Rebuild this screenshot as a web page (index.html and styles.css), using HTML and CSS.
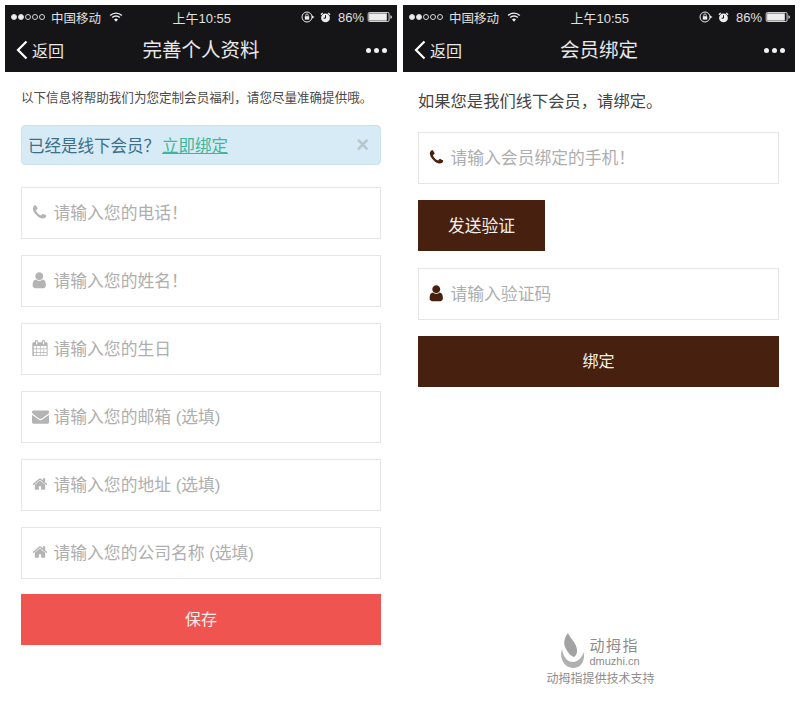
FILE: index.html
```html
<!DOCTYPE html>
<html lang="zh-CN">
<head>
  <meta charset="UTF-8">
  <meta name="viewport" content="width=device-width, initial-scale=1.0">
  <title>会员绑定</title>
  <link rel="stylesheet" href="styles.css">
</head>
<body>
  <!-- Shared icons -->
  <svg class="icon-defs" xmlns="http://www.w3.org/2000/svg">
    <symbol id="i-phone" viewBox="0 0 1792 1792"><path d="M1600 1240q0 27-10 70.5t-21 68.5q-21 50-122 106-94 51-186 51-27 0-53-3.5t-57.5-12.5-47-14.5-55.5-20.5-49-18q-98-35-175-83-127-79-264-216t-216-264q-48-77-83-175-3-9-18-49t-20.5-55.5-14.5-47-12.5-57.5-3.5-53q0-92 51-186 56-101 106-122 25-11 68.5-21t70.5-10q14 0 21 3 18 6 53 76 11 19 30 54t35 63.5 31 53.5q3 4 17.5 25t21.5 35.5 7 28.5q0 20-28.5 50t-62 55-62 53-28.5 46q0 9 5 22.5t8.5 20.5 14 24 11.5 19q76 137 174 235t235 174q2 1 19 11.5t24 14 20.5 8.5 22.5 5q18 0 46-28.5t53-62 55-62 50-28.5q14 0 28.5 7t35.5 21.5 25 17.5q25 15 53.5 31t63.5 35 54 30q70 35 76 53 3 7 3 21z"/></symbol>
    <symbol id="i-user" viewBox="0 0 1792 1792"><path d="M1536 1399q0 109-62.5 187t-150.5 78h-854q-88 0-150.5-78t-62.5-187q0-85 8.5-160.5t31.5-152 58.5-131 94-89 134.5-34.5q131 128 313 128t313-128q76 0 134.5 34.5t94 89 58.5 131 31.5 152 8.5 160.5zm-256-887q0 159-112.5 271.5t-271.5 112.5-271.5-112.5-112.5-271.5 112.5-271.5 271.5-112.5 271.5 112.5 112.5 271.5z"/></symbol>
    <symbol id="i-calendar" viewBox="0 0 1792 1792"><path d="M192 1664h288v-288h-288v288zm352 0h320v-288h-320v288zm-352-352h288v-320h-288v320zm352 0h320v-320h-320v320zm-352-384h288v-288h-288v288zm736 736h320v-288h-320v288zm-384-736h320v-288h-320v288zm768 736h288v-288h-288v288zm-384-352h320v-320h-320v320zm-352-864v-288q0-13-9.5-22.5t-22.5-9.5h-64q-13 0-22.5 9.5t-9.5 22.5v288q0 13 9.5 22.5t22.5 9.5h64q13 0 22.5-9.5t9.5-22.5zm736 864h288v-320h-288v320zm-384-384h320v-288h-320v288zm352 0h288v-288h-288v288zm32-480v-288q0-13-9.5-22.5t-22.5-9.5h-64q-13 0-22.5 9.5t-9.5 22.5v288q0 13 9.5 22.5t22.5 9.5h64q13 0 22.5-9.5t9.5-22.5zm384-64v1280q0 52-38 90t-90 38h-1408q-52 0-90-38t-38-90v-1280q0-52 38-90t90-38h128v-96q0-66 47-113t113-47h64q66 0 113 47t47 113v96h384v-96q0-66 47-113t113-47h64q66 0 113 47t47 113v96h128q52 0 90 38t38 90z"/></symbol>
    <symbol id="i-mail" viewBox="0 0 1792 1792"><path d="M1792 710v794q0 66-47 113t-113 47h-1472q-66 0-113-47t-47-113v-794q44 49 101 87 362 246 497 345 57 42 92.5 65.5t94.5 48 110 24.5h2q51 0 110-24.5t94.5-48 92.5-65.5q170-123 498-345 57-39 100-87zm0-294q0 79-49 151t-122 123q-376 261-468 325-10 7-42.5 30.5t-54 38-52 32.5-57.5 27-50 9h-2q-23 0-50-9t-57.5-27-52-32.5-54-38-42.5-30.5q-91-64-262-182.5t-205-142.5q-62-42-117-115.5t-55-136.5q0-78 41.5-130t118.5-52h1472q65 0 112.5 47t47.5 113z"/></symbol>
    <symbol id="i-home" viewBox="0 0 1792 1792"><path d="M1472 992v480q0 26-19 45t-45 19h-384v-384h-256v384h-384q-26 0-45-19t-19-45v-480q0-1 .5-3t.5-3l575-474 575 474q1 2 1 6zm223-69l-62 74q-8 9-21 11h-3q-13 0-21-7l-692-577-692 577q-12 8-24 7-13-2-21-11l-62-74q-8-10-7-23.5t11-21.5l719-599q32-26 76-26t76 26l244 204v-195q0-14 9-23t23-9h192q14 0 23 9t9 23v408l219 182q10 8 11 21.5t-7 23.5z"/></symbol>
    <symbol id="i-wifi" viewBox="0 0 16 12"><path d="M8 11.8 5.6 9a3.4 3.4 0 0 1 4.8 0z"/><path d="M1 4.2a10 10 0 0 1 14 0M3.4 6.7a6.6 6.6 0 0 1 9.2 0" fill="none" stroke="currentColor" stroke-width="1.6"/></symbol>
    <symbol id="i-lock" viewBox="0 0 14 12"><circle cx="6" cy="6" r="5" fill="none" stroke="currentColor" stroke-width="1"/><rect x="3.8" y="5.2" width="4.4" height="3.4"/><path d="M4.8 5.2V4a1.2 1.2 0 0 1 2.4 0v1.2" fill="none" stroke="currentColor" stroke-width=".8"/><path d="M11 4.5 13.5 6 11 7.5z"/></symbol>
    <symbol id="i-alarm" viewBox="0 0 12 12"><circle cx="6" cy="6.5" r="4.8"/><path d="M1 3 3 1M11 3 9 1" stroke="currentColor" stroke-width="1.4"/><path d="M6 3.5v3.2H3.8" fill="none" stroke="#000" stroke-width="1"/></symbol>
    <symbol id="i-battery" viewBox="0 0 27 11"><rect x=".5" y=".5" width="23" height="10" rx="1.5" fill="none" stroke="currentColor"/><rect x="1.5" y="1.5" width="19.5" height="8"/><path d="M25 3.5c1 .2 1.5 1 1.5 2s-.5 1.8-1.5 2z"/></symbol>
  </svg>

  <div class="screens">
    <!-- Profile form -->
    <div class="phone">
      <div class="status-bar">
        <div class="status-left">
          <span class="signal"><i class="on"></i><i class="on"></i><i></i><i></i><i></i></span>
          <span>中国移动</span>
          <svg class="ico-wifi"><use href="#i-wifi"/></svg>
        </div>
        <div class="status-time">上午10:55</div>
        <div class="status-right">
          <svg class="ico-lock"><use href="#i-lock"/></svg>
          <svg class="ico-alarm"><use href="#i-alarm"/></svg>
          <span>86%</span>
          <svg class="ico-battery"><use href="#i-battery"/></svg>
        </div>
      </div>
      <div class="nav-bar">
        <div class="nav-back">
          <svg class="chevron" viewBox="0 0 12 20"><path d="M10.5 1.5 2 10l8.5 8.5" fill="none" stroke="#fff" stroke-width="2.2"/></svg>
          <span>返回</span>
        </div>
        <div class="nav-title">完善个人资料</div>
        <div class="nav-more"><i></i><i></i><i></i></div>
      </div>

      <div class="content">
        <p class="intro">以下信息将帮助我们为您定制会员福利，请您尽量准确提供哦。</p>
        <div class="alert">
          <span>已经是线下会员？<a class="alert-link" href="#">立即绑定</a></span>
          <span class="alert-close">×</span>
        </div>
        <div class="field">
          <svg class="field-icon"><use href="#i-phone"/></svg>
          <span class="field-hint">请输入您的电话！</span>
        </div>
        <div class="field">
          <svg class="field-icon icon-user"><use href="#i-user"/></svg>
          <span class="field-hint">请输入您的姓名！</span>
        </div>
        <div class="field">
          <svg class="field-icon icon-calendar"><use href="#i-calendar"/></svg>
          <span class="field-hint">请输入您的生日</span>
        </div>
        <div class="field">
          <svg class="field-icon icon-mail"><use href="#i-mail"/></svg>
          <span class="field-hint">请输入您的邮箱 (选填)</span>
        </div>
        <div class="field">
          <svg class="field-icon icon-home"><use href="#i-home"/></svg>
          <span class="field-hint">请输入您的地址 (选填)</span>
        </div>
        <div class="field">
          <svg class="field-icon icon-home"><use href="#i-home"/></svg>
          <span class="field-hint">请输入您的公司名称 (选填)</span>
        </div>
        <button class="btn btn-save" type="button">保存</button>
      </div>
    </div>

    <!-- Member binding -->
    <div class="phone">
      <div class="status-bar">
        <div class="status-left">
          <span class="signal"><i class="on"></i><i class="on"></i><i></i><i></i><i></i></span>
          <span>中国移动</span>
          <svg class="ico-wifi"><use href="#i-wifi"/></svg>
        </div>
        <div class="status-time">上午10:55</div>
        <div class="status-right">
          <svg class="ico-lock"><use href="#i-lock"/></svg>
          <svg class="ico-alarm"><use href="#i-alarm"/></svg>
          <span>86%</span>
          <svg class="ico-battery"><use href="#i-battery"/></svg>
        </div>
      </div>
      <div class="nav-bar">
        <div class="nav-back">
          <svg class="chevron" viewBox="0 0 12 20"><path d="M10.5 1.5 2 10l8.5 8.5" fill="none" stroke="#fff" stroke-width="2.2"/></svg>
          <span>返回</span>
        </div>
        <div class="nav-title">会员绑定</div>
        <div class="nav-more"><i></i><i></i><i></i></div>
      </div>

      <div class="content content-bind">
        <p class="intro-bind">如果您是我们线下会员，请绑定。</p>
        <div class="field">
          <svg class="field-icon brown"><use href="#i-phone"/></svg>
          <span class="field-hint">请输入会员绑定的手机！</span>
        </div>
        <button class="btn btn-brown btn-send" type="button">发送验证</button>
        <div class="field">
          <svg class="field-icon icon-user brown"><use href="#i-user"/></svg>
          <span class="field-hint">请输入验证码</span>
        </div>
        <button class="btn btn-brown" type="button">绑定</button>

        <div class="support">
          <div class="support-brand">
            <svg class="support-logo" viewBox="0 0 24 35">
              <path d="M7 0C3 5 2 11 5 16c2 4 5 7 8 8 3-2 4-6 2-11C14 9 9 5 7 0z" fill="#a2a2a2"/>
              <path d="M1 16C-2 25 3 35 12 35c8 0 12-7 11-16-2 5-5 9-10 10C7 30 2 24 1 16z" fill="#b0b0b0"/>
            </svg>
            <div class="support-name">
              <div class="support-cn">动拇指</div>
              <div class="support-en">dmuzhi.cn</div>
            </div>
          </div>
          <div class="support-text">动拇指提供技术支持</div>
        </div>
      </div>
    </div>
  </div>
</body>
</html>
```

FILE: styles.css
```css
/* General layout */
* {
  box-sizing: border-box;
}

html, body {
  margin: 0;
  padding: 0;
  height: 100%;
  overflow: hidden;
  background-color: #fff;
  font-family: "Liberation Sans", "Noto Sans CJK SC", sans-serif;
}

.icon-defs {
  position: absolute;
  width: 0;
  height: 0;
}

.screens {
  display: flex;
  gap: 6px;
  padding: 5px;
}

.phone {
  width: 392px;
}

/* Status bar */
.status-bar {
  display: flex;
  align-items: center;
  justify-content: space-between;
  height: 23px;
  padding: 1px 4px 0 6px;
  background-color: #151517;
  color: #e0e0e0;
  font-size: 12.5px;
  position: relative;
}

.status-left, .status-right {
  display: flex;
  align-items: center;
}

.signal {
  display: flex;
  gap: 1px;
  margin-right: 6px;
}

.signal i {
  width: 6px;
  height: 6px;
  border: 1px solid #d8d8d8;
  border-radius: 50%;
}

.signal i.on {
  background-color: #eee;
}

.status-time {
  position: absolute;
  left: 167.5px;
  font-size: 13px;
}

.status-bar svg {
  fill: #ededed;
  color: #ededed;
}

.ico-wifi {
  width: 14px;
  height: 10px;
  margin-left: 8px;
}

.ico-lock {
  width: 14px;
  height: 12px;
  margin-right: 5px;
}

.ico-alarm {
  width: 11px;
  height: 11px;
  margin-right: 7px;
}

.status-right span {
  font-size: 13px;
}

.ico-battery {
  width: 26px;
  height: 10px;
  margin-left: 3px;
}

/* Nav bar */
.nav-bar {
  position: relative;
  display: flex;
  align-items: center;
  justify-content: space-between;
  height: 44px;
  padding: 0 10px 0 11px;
  background-color: #151517;
  color: #e8e8e8;
}

.nav-back {
  display: flex;
  align-items: center;
  gap: 4px;
  font-size: 16px;
}

.chevron {
  width: 12px;
  height: 20px;
}

.nav-title {
  position: absolute;
  left: 0;
  right: 0;
  text-align: center;
  font-size: 19.5px;
  line-height: 42px;
}

.nav-more {
  display: flex;
  gap: 3px;
}

.nav-more i {
  width: 5px;
  height: 5px;
  border-radius: 50%;
  background-color: #f2f2f2;
}

/* Content */
.content {
  padding: 0 16px;
}

.intro {
  margin: 0;
  padding-top: 18px;
  height: 53px;
  font-size: 12.55px;
  line-height: 17px;
  color: #4a4a4a;
}

.alert {
  display: flex;
  align-items: center;
  justify-content: space-between;
  height: 40px;
  margin-bottom: 22px;
  padding: 0 11px 0 6px;
  background-color: #d6ebf5;
  border: 1px solid #c6e3ee;
  border-radius: 4px;
  font-size: 16.5px;
  color: #3b6f88;
}

.alert-link {
  margin-left: 2px;
  color: #3fb59a;
}

.alert-close {
  font-size: 22px;
  font-weight: bold;
  line-height: 1;
  color: #b9c6cc;
}

.field {
  display: flex;
  align-items: center;
  height: 52px;
  margin-bottom: 16px;
  padding: 0 0 2px 9px;
  background-color: #fff;
  border: 1px solid #e6e6e6;
}

.field-icon {
  flex: none;
  width: 17px;
  height: 17px;
  margin-right: 5.5px;
  fill: #b4b4b4;
}

.field-icon.icon-user {
  width: 18.5px;
  height: 18.5px;
  margin-left: -1px;
  margin-right: 5px;
}

.field-icon.icon-calendar {
  width: 16.5px;
  height: 16.5px;
  margin-left: 1px;
  margin-right: 5px;
}

.field-icon.icon-mail {
  margin-left: 1px;
  margin-right: 4.5px;
}

.field-icon.icon-home {
  width: 16px;
  height: 16px;
  margin-left: 1px;
  margin-right: 5.5px;
}

.field-icon.brown {
  fill: #47200f;
}

.field-hint {
  font-size: 16.8px;
  color: #aeaeae;
}

.btn {
  display: block;
  width: 100%;
  height: 51px;
  padding: 0 0 3px;
  border: none;
  font-family: inherit;
  font-size: 16px;
  color: #f5f0ea;
}

.btn-save {
  background-color: #f05451;
  margin-top: -1px;
}

.btn-brown {
  background-color: #47200f;
}

.btn-send {
  width: 127px;
  margin-bottom: 17px;
  padding-bottom: 1px;
  font-size: 16.8px;
}

/* Binding screen */
.content-bind {
  padding: 0 16px 0 15px;
}

.intro-bind {
  margin: 0;
  padding-top: 17px;
  height: 60px;
  font-size: 16.3px;
  line-height: 24px;
  color: #444;
}

/* Footer credit */
.support {
  margin-top: 246px;
  margin-left: 4px;
  display: flex;
  flex-direction: column;
  align-items: center;
}

.support-brand {
  display: flex;
  align-items: flex-end;
  gap: 4px;
}

.support-logo {
  width: 24px;
  height: 35px;
}

.support-cn {
  padding-top: 1px;
  font-size: 15px;
  letter-spacing: 1.5px;
  line-height: 18px;
  color: #8c8c8c;
}

.support-en {
  font-size: 11px;
  line-height: 13px;
  color: #8c8c8c;
}

.support-text {
  margin-top: 3px;
  font-size: 12px;
  line-height: 16px;
  color: #8c8c8c;
}
```
